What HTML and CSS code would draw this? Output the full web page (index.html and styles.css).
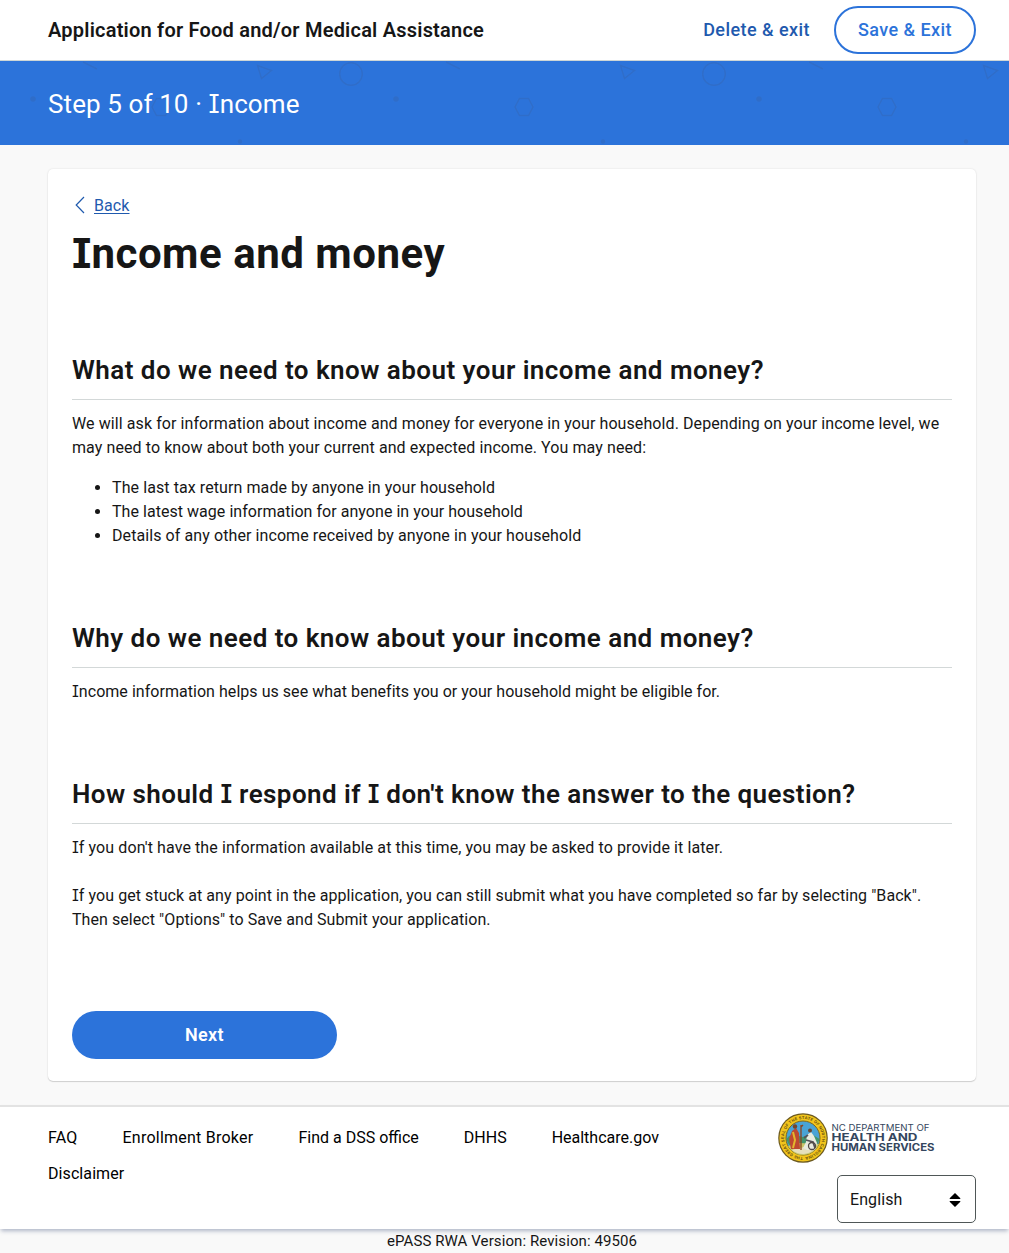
FILE: index.html
```html
<!DOCTYPE html>
<html lang="en">
<head>
<meta charset="utf-8">
<title>Income and money</title>
<link rel="stylesheet" href="styles.css">
</head>
<body>
<header class="topbar">
  <div class="app-title">Application for Food and/or Medical Assistance</div>
  <nav class="actions">
    <a class="delete-link" href="#">Delete &amp; exit</a>
    <button class="save-button" type="button">Save &amp; Exit</button>
  </nav>
</header>

<div class="banner">
  <svg class="banner-pattern" width="1009" height="84" aria-hidden="true">
    <defs>
      <pattern id="shapes" width="363" height="84" patternUnits="userSpaceOnUse">
        <g fill="none" stroke="#3069c0" stroke-width="1.5" opacity=".65">
          <path d="M83 1l14 7M257.500 4.500l14 5-10 8z"/>
          <circle cx="351" cy="13" r="11.300"/>
          <path d="M156.500 37.500h9l4.500 8.500-4.500 8.500h-9l-4.500-8.500z"/>
          <circle cx="33" cy="38" r="2.800" fill="#3069c0" stroke="none"/>
          <circle cx="240" cy="80.500" r="2.300" fill="#3069c0" stroke="none"/>
        </g>
      </pattern>
    </defs>
    <rect width="1009" height="84" fill="url(#shapes)"/>
  </svg>
  <div class="step">Step 5 of 10 · <span class="cap-i">I</span>ncome</div>
</div>

<main class="card">
  <a class="back" href="#">
    <svg width="10" height="18" viewBox="0 0 10 18" aria-hidden="true"><path d="M9 1L1.200 9L9 17" fill="none" stroke="#1f5aae" stroke-width="1.200"/></svg>
    <span class="back-text">Back</span>
  </a>
  <h1><span class="cap-i">I</span>ncome and money</h1>

  <section>
    <h2>What do we need to know about your income and money?</h2>
    <p>We will ask for information about income and money for everyone in your household. Depending on your income level, we may need to know about both your current and expected income. You may need:</p>
    <ul>
      <li>The last tax return made by anyone in your household</li>
      <li class="wage">The latest wage information for anyone in your household</li>
      <li>Details of any other income received by anyone in your household</li>
    </ul>
  </section>

  <section>
    <h2>Why do we need to know about your income and money?</h2>
    <p class="helps"><span class="cap-i">I</span>ncome information helps us see what benefits you or your household might be eligible for.</p>
  </section>

  <section>
    <h2 class="respond">How should <span class="cap-i">I</span> respond if <span class="cap-i">I</span> don't know the answer to the question?</h2>
    <p class="later"><span class="cap-i">I</span>f you don't have the information available at this time, you may be asked to provide it later.</p>
    <p class="stuck"><span class="cap-i">I</span>f you get stuck at any point in the application, you can still submit what you have completed so far by selecting "Back". Then select "Options" to Save and Submit your application.</p>
  </section>

  <button class="next-button" type="button">Next</button>
</main>

<footer class="footer">
  <ul class="links">
    <li class="faq">FAQ</li><li class="broker">Enrollment Broker</li><li class="dss">Find a DSS office</li><li class="dhhs">DHHS</li><li class="health">Healthcare.gov</li><li>Disclaimer</li>
  </ul>
  <div class="footer-side">
    <svg class="logo" width="160" height="52" viewBox="0 0 160 52" role="img" aria-label="NC Department of Health and Human Services">
      <defs><path id="ring" d="M25 45a19 19 0 1 1 .1 0"/></defs>
      <circle cx="25" cy="26" r="24.800" fill="#6b5920"/>
      <circle cx="25" cy="26" r="23.600" fill="#f2c51c"/>
      <text class="seal-text"><textPath href="#ring" textLength="117">THE GREAT SEAL OF THE STATE OF NORTH CAROLINA</textPath></text>
      <circle cx="25" cy="26" r="17" fill="#4aa3d5" stroke="#806616" stroke-width="1"/>
      <path d="M8.500 27q4-6 9-4l7 2 9-3 8 5a17 17 0 0 1-33 0z" fill="#43956c"/>
      <path d="M10 34l11-3 20 1a17 17 0 0 1-31 2z" fill="#c9c86b"/>
      <path d="M14 38q11-5 23-1a17 17 0 0 1-23 1z" fill="#e5dfbd"/>
      <path d="M14 19l4-3 3 5 1 16h-9l-2-10z" fill="#bd4930"/>
      <path d="M15 20l2 8-2 8" fill="none" stroke="#e3b72c" stroke-width="2"/>
      <circle cx="17" cy="14.500" r="2.200" fill="#76452a"/>
      <path d="M23 13v25M23 15l2-2" stroke="#8a4420" stroke-width="1.300"/>
      <path d="M29 23l4-3 3 4 3 7-2 7h-8l-4-2 3-6z" fill="#e9ece0"/>
      <path d="M28 28l7 2 2 6M30 23l-4 3" fill="none" stroke="#56545b" stroke-width="1.800"/>
      <circle cx="32" cy="18.500" r="2" fill="#674732"/>
      <circle cx="34" cy="34" r="3.500" fill="none" stroke="#514945" stroke-width="1.300"/>
      <g class="logo-text">
        <text class="logo-dept" x="53.500" y="19" textLength="98" lengthAdjust="spacingAndGlyphs">NC DEPARTMENT OF</text>
        <text x="53.500" y="29.300" textLength="86" lengthAdjust="spacingAndGlyphs">HEALTH AND</text>
        <text x="53.500" y="38.600" textLength="103" lengthAdjust="spacingAndGlyphs">HUMAN SERVICES</text>
      </g>
    </svg>
    <div class="language">
      <span>English</span>
      <svg width="12" height="14" viewBox="0 0 12 14" aria-hidden="true"><path d="M6 0l5.300 5.200v.8H.7v-.8zM.7 8h10.600v.8L6 14 .7 8.800z"/></svg>
    </div>
  </div>
</footer>
<div class="version">ePASS RWA Version: Revision: 49506</div>
</body>
</html>
```
FILE: styles.css
```css
* { box-sizing: border-box; }
html { overflow: hidden; }
body {
  margin: 0;
  background: #f9f9f9;
  color: #161616;
  font: 16px/24px Roboto, "Liberation Sans", sans-serif;
  letter-spacing: .086px;
}
h1, h2, p, ul { margin: 0; padding: 0; }
a { color: #1f5aae; text-decoration: none; }
button { font: inherit; border: 0; }

/* capital I with slab serifs */
.cap-i {
  font-family: Inter, sans-serif;
  font-feature-settings: "cv08" 1;
  font-size: .97em;
  line-height: 1;
  letter-spacing: 0;
}

.topbar {
  height: 61px;
  padding: 0 33px 0 48px;
  display: flex;
  align-items: center;
  justify-content: space-between;
  background: #fff;
  border-bottom: 1px solid #cfd6d6;
}
.app-title { font-size: 20px; font-weight: 600; letter-spacing: .21px; }
.actions { display: flex; align-items: center; gap: 24px; font-size: 18px; font-weight: 500; letter-spacing: .45px; }
.save-button {
  width: 142px;
  height: 48px;
  padding: 0;
  border: 2px solid #2c73da;
  border-radius: 24px;
  background: #fff;
  color: #2c73da;
  letter-spacing: .44px;
}

.banner { position: relative; height: 84px; padding-left: 48px; display: flex; align-items: center; background: #2c73da; }
.banner-pattern { position: absolute; inset: 0; }
.step { position: relative; padding-top: 2px; color: #fff; font-size: 26px; line-height: 32px; letter-spacing: .1px; }

.card {
  margin: 24px 33px 0 48px;
  height: 912px;
  padding: 25px 24px 22px;
  background: #fff;
  border-radius: 5px;
  box-shadow: 0 0 2px rgba(0, 0, 0, .12), 0 1px 1px rgba(0, 0, 0, .14);
}
.back { display: flex; align-items: center; gap: 8px; padding-left: 4px; height: 24px; }
.back svg { margin: -3px 1px 0 -1px; }
.back-text { text-decoration: underline; text-underline-offset: 2px; }
h1 { margin-top: 11px; font-size: 42px; line-height: 50px; font-weight: 700; letter-spacing: .52px; }
section { padding-top: 75px; }
section + section { padding-top: 74px; }
h2 {
  height: 46px;
  margin-bottom: 12px;
  border-bottom: 1px solid #d3d8d8;
  font-size: 26px;
  line-height: 32px;
  font-weight: 600;
  letter-spacing: .46px;
}
h2.respond { letter-spacing: .43px; }
.card ul { margin-top: 16px; padding-left: 40px; }
.wage { letter-spacing: .04px; }
.helps { letter-spacing: .04px; }
.later { letter-spacing: .095px; }
.stuck { margin-top: 24px; letter-spacing: .065px; }
.next-button {
  display: block;
  width: 265px;
  height: 48px;
  margin-top: 79px;
  border-radius: 24px;
  background: #2c73da;
  color: #fff;
  font-size: 18px;
  font-weight: 600;
  letter-spacing: .35px;
}

.footer {
  position: relative;
  margin-top: 24px;
  height: 124px;
  padding: 0 33px 0 48px;
  display: flex;
  justify-content: space-between;
  background: #fff;
  border-top: 2px solid #e3e3e3;
  box-shadow: 0 3px 4px -1px rgba(40, 60, 110, .35);
  color: #000;
}
.links { width: 680px; padding-top: 19px; display: flex; flex-wrap: wrap; align-content: flex-start; gap: 12px 45px; list-style: none; }
.faq { letter-spacing: .2px; }
.broker { letter-spacing: .24px; }
.dss, .dhhs, .health { letter-spacing: 0; }
.footer-side { width: 198px; padding-top: 5px; display: flex; flex-direction: column; gap: 11px; }
.logo { display: block; }
.seal-text { font: 700 4px Inter, sans-serif; fill: #6b5310; }
.logo-text { font: 700 9.800px Inter, sans-serif; fill: #34465e; letter-spacing: 0; }
.logo-dept { font-size: 8.800px; font-weight: 400; }
.language {
  align-self: flex-end;
  width: 139px;
  height: 48px;
  padding: 1px 14px 0 12px;
  display: flex;
  align-items: center;
  justify-content: space-between;
  border: 1px solid #4f5757;
  border-radius: 5px;
  color: #161616;
}
.version { padding-left: 15px; text-align: center; font-size: 15px; line-height: 24px; letter-spacing: .09px; }
```
